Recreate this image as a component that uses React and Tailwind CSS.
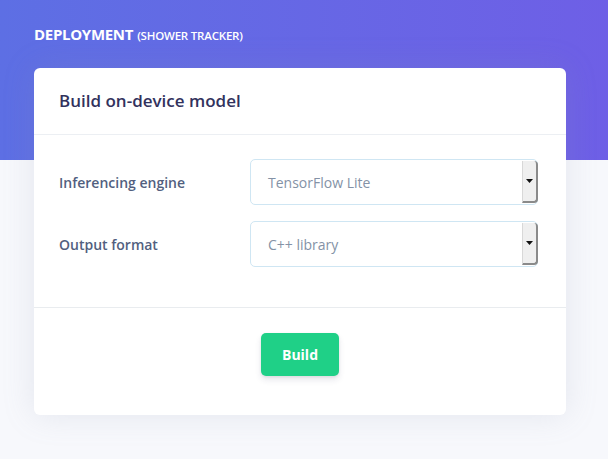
import React from 'react';

const SelectBox = ({ value }) => (
  <div className="flex h-[46px] w-[288px] items-stretch rounded-[5px] border border-[#cfe6f3] bg-white">
    <div className="flex flex-1 items-center pl-[17px] text-[14px] text-[#8492a6]">{value}</div>
    <div className="my-[1px] mr-[-1px] flex w-[16px] items-center justify-center rounded-r-[4px] border-r-2 border-b-2 border-l border-r-[#8a8a8a] border-b-[#8a8a8a] border-l-[#d8d8d8] bg-[#efefef]">
      <svg width="7" height="4" viewBox="0 0 7 4">
        <path d="M0 0 L7 0 L3.5 4 Z" fill="#111" />
      </svg>
    </div>
  </div>
);

const App = () => {
  return (
    <div className="min-h-screen bg-[#f7f8fc]" style={{ fontFamily: '"Open Sans", sans-serif' }}>
      {/* Header */}
      <div className="h-[160px] bg-gradient-to-r from-[#5d6fe4] to-[#6e5fe6] pl-[34px] pt-[23px]">
        <div className="flex items-baseline gap-[4px] text-white">
          <span className="text-[15px] font-bold tracking-[-0.3px]">DEPLOYMENT</span>
          <span className="text-[11.5px] font-semibold tracking-[-0.2px]">(SHOWER TRACKER)</span>
        </div>
      </div>

      {/* Card */}
      <div className="ml-[34px] mr-[42px] -mt-[92px] rounded-[6px] bg-white shadow-[0_0_32px_rgba(136,152,170,0.18)]">
        <div className="border-b border-[#eceff3] px-[25px] py-[21px]">
          <h3 className="text-[17px] font-semibold leading-[24px] text-[#32325d]">Build on-device model</h3>
        </div>

        <div className="border-b border-[#e9ecef] px-[25px] pt-[24px] pb-[40px]">
          <div className="flex flex-col gap-[16px]">
            <div className="flex items-center">
              <label className="w-[191px] text-[14px] font-semibold text-[#525f7f]">Inferencing engine</label>
              <SelectBox value="TensorFlow Lite" />
            </div>
            <div className="flex items-center">
              <label className="w-[191px] text-[14px] font-semibold text-[#525f7f]">Output format</label>
              <SelectBox value="C++ library" />
            </div>
          </div>
        </div>

        <div className="flex justify-center pt-[25px] pb-[39px]">
          <button className="h-[43px] w-[78px] rounded-[5px] bg-[#1fd087] text-[14px] font-bold text-white shadow-[0_4px_6px_rgba(50,50,93,0.11),0_1px_3px_rgba(0,0,0,0.08)]">
            Build
          </button>
        </div>
      </div>
    </div>
  );
};

export default App;
